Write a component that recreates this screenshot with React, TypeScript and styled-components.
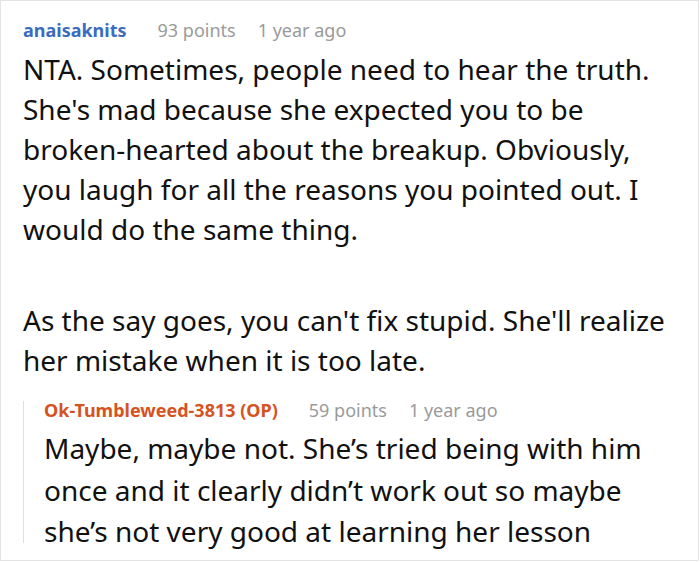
import styled, { createGlobalStyle } from "styled-components";

const GlobalStyle = createGlobalStyle`
  html, body {
    margin: 0;
    padding: 0;
    background: #fff;
  }
  body {
    font-family: "Noto Sans", "Open Sans", sans-serif;
    color: #111;
  }
`;

interface NameProps {
  $color: string;
}

const Card = styled.div`
  box-sizing: border-box;
  width: 699px;
  height: 561px;
  border: 1px solid #e3e3e3;
  padding: 17px 0 0 22px;
  overflow: hidden;
`;

const Meta = styled.div`
  display: flex;
  align-items: baseline;
  height: 24px;
  line-height: 24px;
  font-size: 18px;
  white-space: nowrap;
`;

const Name = styled.span<NameProps>`
  font-weight: 700;
  color: ${(props) => props.$color};
  margin-right: 31px;
`;

const Info = styled.span`
  color: #9a9a9a;
  margin-right: 22px;
`;

const Body = styled.div`
  margin-top: 7px;
  font-size: 28px;
  line-height: 40px;

  p {
    margin: 0;
  }
  p + p {
    margin-top: 51px;
  }
`;

const Reply = styled.div`
  position: relative;
  margin-top: 18px;
  padding-left: 21px;

  &::before {
    content: "";
    position: absolute;
    left: 0;
    top: 3px;
    bottom: 10px;
    width: 1px;
    background: #e0e0e0;
  }
`;

const ReplyBody = styled.div`
  margin-top: 6px;
  font-size: 28px;
  line-height: 41.5px;

  p {
    margin: 0;
  }
`;

const App: React.FC = () => {
  return (
    <>
      <GlobalStyle />
      <Card>
        <Meta>
          <Name $color="#3b6cbf">anaisaknits</Name>
          <Info>93 points</Info>
          <Info>1 year ago</Info>
        </Meta>
        <Body>
          <p>
            NTA. Sometimes, people need to hear the truth.
            <br />
            She's mad because she expected you to be
            <br />
            broken-hearted about the breakup. Obviously,
            <br />
            you laugh for all the reasons you pointed out. I
            <br />
            would do the same thing.
          </p>
          <p>
            As the say goes, you can't fix stupid. She'll realize
            <br />
            her mistake when it is too late.
          </p>
        </Body>
        <Reply>
          <Meta>
            <Name $color="#d4531f">Ok-Tumbleweed-3813 (OP)</Name>
            <Info>59 points</Info>
            <Info>1 year ago</Info>
          </Meta>
          <ReplyBody>
            <p>
              Maybe, maybe not. She’s tried being with him
              <br />
              once and it clearly didn’t work out so maybe
              <br />
              she’s not very good at learning her lesson
            </p>
          </ReplyBody>
        </Reply>
      </Card>
    </>
  );
};

export default App;
